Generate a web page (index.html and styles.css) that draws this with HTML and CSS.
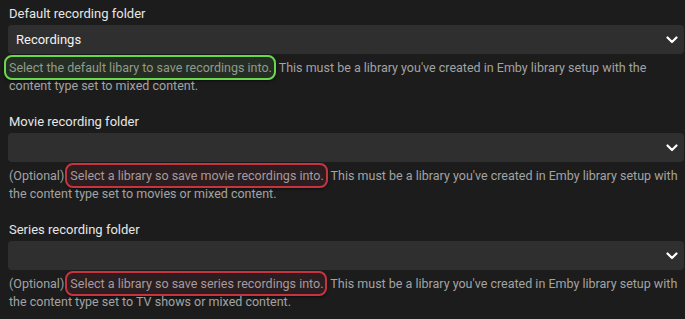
FILE: index.html
```html
<!DOCTYPE html>
<html lang="en">
    <head>
        <meta charset="UTF-8" />
        <meta name="viewport" content="width=device-width, initial-scale=1.0" />
        <title>Recording folders</title>
        <link rel="stylesheet" href="styles.css">
    </head>
    <body>
        <div class="settings">
            <!-- Default folder -->
            <div class="field">
                <label class="field-label" for="defaultFolder">Default recording folder</label>
                <div class="select-wrap">
                    <select id="defaultFolder">
                        <option>Recordings</option>
                    </select>
                    <svg class="chevron" width="12" height="8" viewBox="0 0 12 8"><path d="M1.5 1.5 L6 6 L10.5 1.5" fill="none" stroke="#fff" stroke-width="2.2" stroke-linecap="round" stroke-linejoin="round"/></svg>
                </div>
                <div class="field-help"><span class="mark mark-ok">Select the default libary to save recordings into.</span> This must be a library you've created in Emby library setup with the content type set to mixed content.</div>
            </div>

            <!-- Movie folder -->
            <div class="field">
                <label class="field-label" for="movieFolder">Movie recording folder</label>
                <div class="select-wrap">
                    <select id="movieFolder">
                        <option></option>
                    </select>
                    <svg class="chevron" width="12" height="8" viewBox="0 0 12 8"><path d="M1.5 1.5 L6 6 L10.5 1.5" fill="none" stroke="#fff" stroke-width="2.2" stroke-linecap="round" stroke-linejoin="round"/></svg>
                </div>
                <div class="field-help">(Optional) <span class="mark mark-bad">Select a library so save movie recordings into.</span> This must be a library you've created in Emby library setup with the content type set to movies or mixed content.</div>
            </div>

            <!-- Series folder -->
            <div class="field">
                <label class="field-label" for="seriesFolder">Series recording folder</label>
                <div class="select-wrap">
                    <select id="seriesFolder">
                        <option></option>
                    </select>
                    <svg class="chevron" width="12" height="8" viewBox="0 0 12 8"><path d="M1.5 1.5 L6 6 L10.5 1.5" fill="none" stroke="#fff" stroke-width="2.2" stroke-linecap="round" stroke-linejoin="round"/></svg>
                </div>
                <div class="field-help">(Optional) <span class="mark mark-bad">Select a library so save series recordings into.</span> This must be a library you've created in Emby library setup with the content type set to TV shows or mixed content.</div>
            </div>
        </div>
    </body>
</html>
```

FILE: styles.css
```css
html,
body {
    margin: 0;
    background-color: #1c1c1c;
}
body {
    font-family: Roboto, "Noto Sans", sans-serif;
    color: #e6e6e6;
}
.settings {
    display: flex;
    flex-direction: column;
    gap: 19px;
    padding: 6px 1px 0 8px;
}
.field {
    display: flex;
    flex-direction: column;
}
.field-label {
    font-size: 13px;
    line-height: 16px;
    padding-left: 1px;
    margin-bottom: 3px;
}
.select-wrap {
    position: relative;
}
.select-wrap select {
    display: block;
    width: 100%;
    height: 29px;
    padding: 0 30px 0 8px;
    border: none;
    border-radius: 4px;
    background-color: #2f2f2f;
    color: #f2f2f2;
    font-family: inherit;
    font-size: 13px;
    appearance: none;
    -webkit-appearance: none;
}
.chevron {
    position: absolute;
    right: 6px;
    top: 11px;
    pointer-events: none;
}
.field-help {
    margin-top: 5px;
    padding-left: 1px;
    font-size: 12.5px;
    line-height: 18px;
    color: #a3a3a3;
}
.mark {
    padding: 3px 2px 3px 3px;
    margin-left: -2px;
    border: 2px solid;
    border-radius: 8px;
    box-shadow: 0 1px 3px rgba(0, 0, 0, 0.6);
}
.mark-ok {
    margin-left: -5px;
    border-color: #6ad84c;
    background-color: #262d24;
    color: #8f9c8b;
}
.mark-bad {
    border-color: #c63440;
    background-color: #2a1e20;
    color: #a89a9c;
}
```
